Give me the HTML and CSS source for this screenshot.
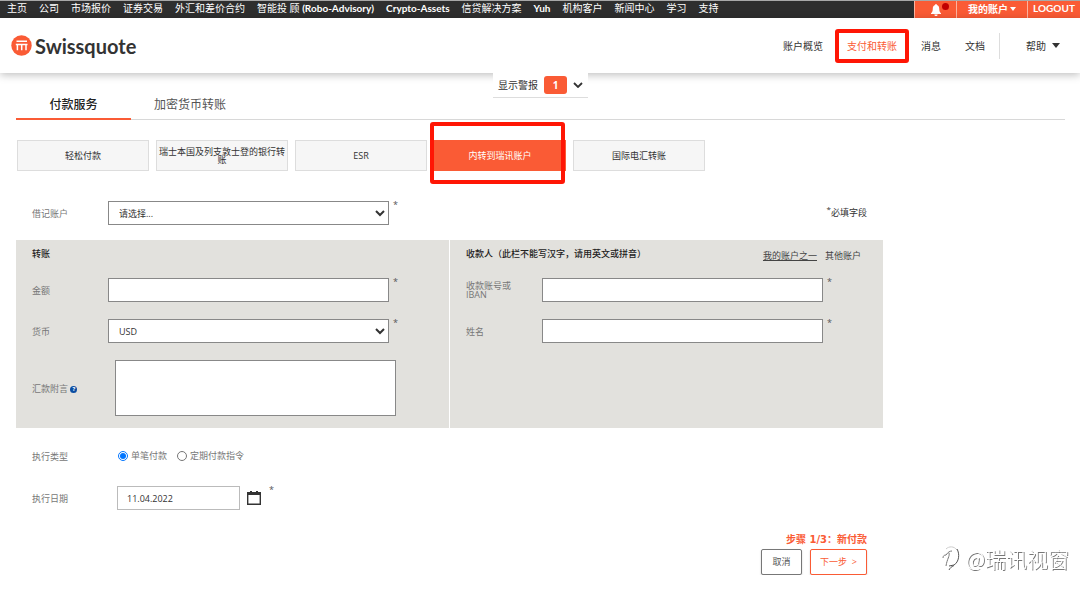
FILE: index.html
```html
<!DOCTYPE html>
<html lang="zh-CN">
<head>
<meta charset="utf-8">
<title>Swissquote</title>
<link rel="stylesheet" href="styles.css">
</head>
<body>
<div class="topbar">
  <nav class="topnav">
    <a href="#">主页</a><a href="#">公司</a><a href="#">市场报价</a><a href="#">证券交易</a><a href="#">外汇和差价合约</a><a href="#">智能投 顾 <b>(Robo-Advisory)</b></a><a href="#"><b>Crypto-Assets</b></a><a href="#">信贷解决方案</a><a href="#"><b>Yuh</b></a><a href="#">机构客户</a><a href="#">新闻中心</a><a href="#">学习</a><a href="#">支持</a>
  </nav>
  <div class="account">
    <button class="bell" type="button" aria-label="通知">
      <svg width="10" height="12" viewBox="0 0 10 12"><path d="M5 0c.6 0 .9.400.9.900C7.400 1.300 8.200 2.600 8.200 4.500c0 2.800.6 3.700 1.800 4.700v.8H0v-.8c1.200-1 1.800-1.900 1.800-4.700 0-1.900.8-3.200 2.300-3.600C4.100.4 4.400 0 5 0zM3.400 10.400h3.200C6.600 11.500 6 12 5 12s-1.600-.5-1.600-1.600z" fill="#fff"/></svg>
      <span class="dot"></span>
    </button>
    <button class="mine" type="button">我的账户<span class="caret"></span></button>
    <a class="logout" href="#">LOGOUT</a>
  </div>
</div>
<header class="header">
  <a class="brand" href="#">
    <svg width="21" height="21" viewBox="0 0 21 21"><circle cx="10.500" cy="10.500" r="10.200" fill="#fa5b35"/><path d="M5.500 6.300h10.500M4.800 9.600h11.700M6.400 15.200V9.600M10.700 15.200V9.600M15 15.200V9.600" fill="none" stroke="#fff" stroke-width="1.500"/></svg>
    <span>Swissquote</span>
  </a>
  <nav class="mainnav">
    <a href="#">账户概览</a>
    <a class="current" href="#">支付和转账</a>
    <a href="#">消息</a>
    <a href="#">文档</a>
    <a class="help" href="#">帮助<span class="caret dark"></span></a>
  </nav>
</header>
<main class="main">
  <button class="alerts" type="button">显示警报<span class="count">1</span>
    <svg width="10" height="6" viewBox="0 0 10 6"><path d="M1 1l4 4 4-4" fill="none" stroke="#333" stroke-width="1.800"/></svg>
  </button>
  <nav class="tabs">
    <a class="active" href="#">付款服务</a>
    <a href="#">加密货币转账</a>
  </nav>
  <div class="types">
    <button type="button">轻松付款</button>
    <button type="button">瑞士本国及列支敦士登的银行转账</button>
    <button type="button">ESR</button>
    <button class="chosen" type="button">内转到瑞讯账户</button>
    <button type="button">国际电汇转账</button>
  </div>
  <form class="form">
    <div class="row debit">
      <label for="debit">借记账户</label>
      <select id="debit"><option>请选择...</option></select><span class="req">*</span>
      <span class="note"><sup>*</sup>必填字段</span>
    </div>
    <div class="panels">
      <section class="panel">
        <h2>转账</h2>
        <div class="row"><label for="amount">金额</label><input id="amount" type="text"><span class="req">*</span></div>
        <div class="row"><label for="currency">货币</label><select id="currency"><option>USD</option></select><span class="req">*</span></div>
        <div class="row memo"><label for="memo">汇款附言 <span class="tip">?</span></label><textarea id="memo"></textarea></div>
      </section>
      <section class="panel payee">
        <div class="panel-head">
          <h2>收款人（此栏不能写汉字，请用英文或拼音）</h2>
          <a class="own" href="#">我的账户之一</a><a href="#">其他账户</a>
        </div>
        <div class="row"><label for="iban">收款账号或IBAN</label><input id="iban" type="text"><span class="req">*</span></div>
        <div class="row"><label for="name">姓名</label><input id="name" type="text"><span class="req">*</span></div>
      </section>
    </div>
    <div class="row exec">
      <span class="caption">执行类型</span>
      <label class="choice"><input type="radio" name="exec" checked>单笔付款</label>
      <label class="choice"><input type="radio" name="exec">定期付款指令</label>
    </div>
    <div class="row date">
      <label for="date">执行日期</label>
      <input id="date" type="text" value="11.04.2022">
      <button class="calendar" type="button" aria-label="选择日期"><svg width="14" height="14" viewBox="0 0 14 14"><path d="M0 1h3V0h2v1h4V0h2v1h3v13H0zM1.400 4v8.600h11.200V4z" fill="#333" fill-rule="evenodd"/></svg></button>
      <span class="req">*</span>
    </div>
    <div class="finish">
      <p>步骤 1/3：新付款</p>
      <div class="actions"><button type="button">取消</button><button class="next" type="button">下一步&nbsp; &gt;</button></div>
    </div>
  </form>
</main>
<div class="mark">
  <svg width="18" height="26" viewBox="0 0 18 26" fill="none"><path d="M4 4C7 1 12 1 15 5" stroke="#ccc"/><path d="M15 4c3 5 2 13-3 16l-5 1M7 25c1-2 2-3 5-4.500" stroke="#555"/><path d="M1 13c0-2 1-3 3-3 2-3 4-4 6-4M7 8c1 3-2 6-3 13" stroke="#777"/></svg>
  <span>@瑞讯视窗</span>
</div>
</body>
</html>
```
FILE: styles.css
```css
* { box-sizing: border-box; }
body {
  margin: 0;
  background: #fff;
  color: #333;
  font: 9px/12px "Open Sans", "Noto Sans CJK SC", sans-serif;
}
a { color: inherit; text-decoration: none; }
button, input, select, textarea { font: inherit; color: inherit; margin: 0; }
button { cursor: pointer; }

.topbar {
  display: flex;
  justify-content: space-between;
  height: 18px;
  border-top: 1px solid #a8a8a8;
  background: #2e2e2e;
  color: #fff;
  font: 10px/15px Lato, "Noto Sans CJK SC", sans-serif;
}
.topnav { display: flex; gap: 12px; padding-left: 7px; white-space: nowrap; }
.account { display: flex; font-weight: bold; }
.account > * {
  display: flex;
  align-items: center;
  justify-content: center;
  border: 0;
  border-left: 1px solid #fcb39f;
  background: #fa5b35;
  color: #fff;
}
.account .bell { position: relative; width: 42px; padding: 0; }
.dot { position: absolute; left: 27px; top: 2px; width: 7px; height: 7px; border-radius: 50%; background: #c00000; }
.account .mine { width: 71px; padding: 0 0 1px; }
.account .logout { width: 53px; padding: 0 0 2px; }
.caret { margin-left: 2px; border: 3px solid transparent; border-top: 4px solid #fff; border-bottom: 0; }
.caret.dark { margin-left: 6px; border-width: 5px 4px 0; border-top-color: #333; }

.header {
  position: relative;
  display: flex;
  align-items: center;
  justify-content: space-between;
  height: 55px;
  padding: 0 20px 0 11px;
  background: #fff;
  box-shadow: 0 2px 8px rgba(0, 0, 0, .25);
}
.brand { display: flex; align-items: center; gap: 3px; color: #333; font: bold 20px/24px Lato, sans-serif; }
.mainnav { display: flex; align-items: center; font-size: 10px; line-height: 26px; }
.mainnav a { padding: 0 12px; }
.mainnav .current { border: 4px solid #ff1605; border-radius: 3px; padding: 0 8px; color: #fa5b35; }
.mainnav .help { display: flex; align-items: center; margin-left: 2px; border-left: 1px solid #ddd; padding: 0 0 0 26px; }

.main { position: relative; padding: 0 15px 0 16px; }
.alerts {
  position: absolute;
  left: 493px;
  top: 0;
  display: flex;
  align-items: center;
  gap: 6px;
  height: 25px;
  border: 0;
  border-bottom: 1px solid #ddd;
  padding: 0 5px;
  background: #fff;
  font-size: 10px;
}
.count { width: 23px; border-radius: 3px; background: #fa5b35; color: #fff; font-weight: bold; line-height: 18px; }
.tabs { display: flex; border-bottom: 1px solid #d8d8d8; padding-top: 19px; font-size: 12px; line-height: 26px; color: #555; }
.tabs a { border-bottom: 2px solid transparent; margin-bottom: -1px; padding: 0 23px; }
.tabs .active { width: 115px; padding: 0; border-color: #fa5b35; color: #222; font-weight: 500; text-align: center; }

.types { display: flex; gap: 7px; padding: 20px 0 0 1px; }
.types button { width: 132px; height: 31px; border: 1px solid #ddd; padding: 0 1px; background: #f6f6f6; line-height: 8px; }
.types .chosen { position: relative; border-color: #fa5b35; background: #fa5b35; color: #fff; }
.chosen::after { content: ""; position: absolute; inset: -19px 0 -14px -5px; border: 4px solid #ff1605; border-radius: 3px; }

.form { width: 867px; color: #777; }
.row { display: flex; align-items: center; margin-bottom: 17px; }
.row > label:first-child, .caption { width: 76px; line-height: 9px; }
.row input[type="text"], .row select { width: 281px; height: 24px; border: 1px solid #888; padding: 0 10px; background: #fff; color: #333; }
.row select { padding: 0 2px 0 6px; }
.req { align-self: flex-start; margin-left: 4px; line-height: 8px; color: #555; }
.debit { margin: 30px 0 15px; padding-left: 16px; }
.note { margin-left: auto; padding-right: 16px; color: #333; }
.note sup { font-size: 8px; line-height: 0; }
.panels { display: grid; grid-template-columns: 433px 433px; gap: 1px; }
.panel { min-height: 188px; background: #e2e1dd; padding: 8px 16px 0; }
.panel h2 { margin: 0; color: #222; font-size: 9px; line-height: 12px; font-weight: 500; }
.panel > h2, .panel-head { margin-bottom: 18px; }
.panel-head { display: flex; gap: 8px; height: 12px; padding-right: 6px; color: #444; line-height: 15px; }
.panel-head h2 { flex: 1; white-space: nowrap; }
.own { text-decoration: underline; }
.payee label { padding-right: 22px; }
.memo { margin: 0; }
.memo label { flex: 0 0 83px; }
.memo textarea { width: 281px; height: 56px; border: 1px solid #888; background: #fff; resize: none; }
.tip { display: inline-block; width: 7px; border-radius: 50%; background: #0b4da2; color: #fff; font-size: 6px; font-weight: bold; line-height: 7px; text-align: center; vertical-align: 1px; }
.exec { margin: 22px 0 24px; padding-left: 16px; }
.caption { flex: 0 0 86px; }
.choice { display: flex; align-items: center; gap: 3px; margin-right: 10px; }
.choice input { width: 10px; height: 10px; }
.date { margin: 0; padding-left: 16px; }
.date > label:first-child { width: 85px; }
.date input[type="text"] { width: 123px; border-color: #bbb; padding: 0 9px; }
.calendar { display: flex; border: 0; padding: 0; margin: 0 4px 0 7px; background: none; }
.finish { display: flex; flex-direction: column; align-items: flex-end; padding: 24px 16px 0 0; }
.finish p { margin: 0 0 3px; color: #fa5b35; font-family: "DejaVu Sans", "Noto Sans CJK SC", sans-serif; font-size: 10px; font-weight: bold; }
.actions { display: flex; gap: 8px; }
.actions button { width: 41px; height: 26px; border: 1px solid #777; border-radius: 2px; padding: 0; background: #fff; box-shadow: 0 1px 2px rgba(0, 0, 0, .2); color: #555; }
.actions .next { width: 57px; border-color: #fa5b35; color: #fa5b35; }

.mark { position: fixed; right: 11px; bottom: 26px; display: flex; align-items: center; gap: 6px; color: #fff; font: 300 21px/28px "Noto Sans CJK SC", sans-serif; text-shadow: 1px 1px 0 #777; }
```
